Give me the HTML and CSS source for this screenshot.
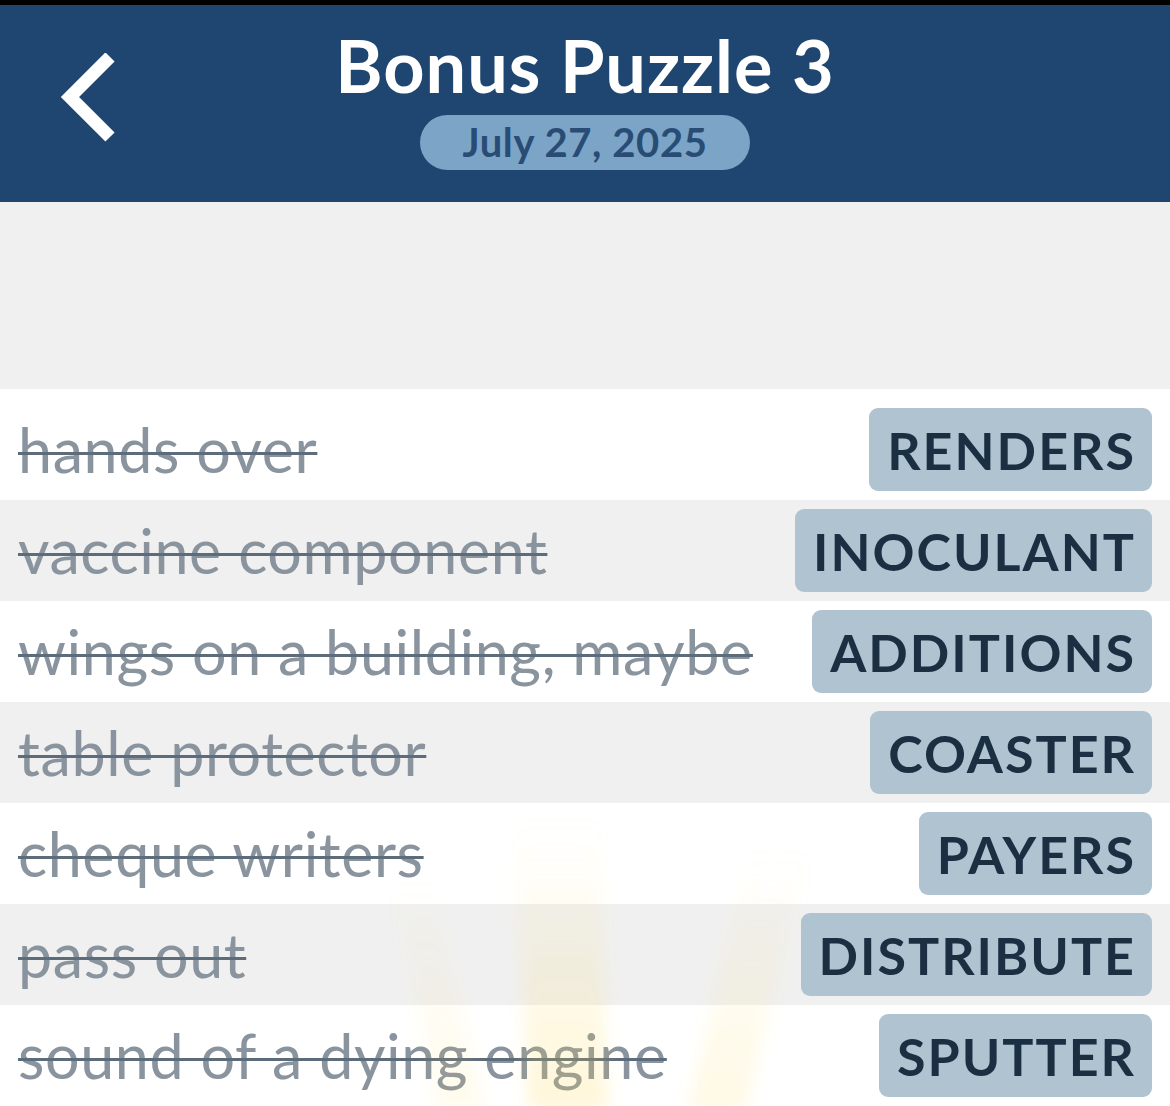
FILE: index.html
```html
<!DOCTYPE html>
<html>
  <head>
    <meta http-equiv="Content-Type" content="text/html;charset=utf-8" />
    <title>Bonus Puzzle 3</title>
    <link rel="stylesheet" href="styles.css">
  </head>
  <body>
    <div class="statusbar"></div>
    <header class="header">
      <a class="back" href="#">
        <svg width="64" height="96" viewBox="0 0 64 96">
          <polyline points="52,4 12,44 52,84" fill="none" stroke="#fff" stroke-width="13" />
        </svg>
      </a>
      <div class="titles">
        <h1 class="title">Bonus Puzzle 3</h1>
        <span class="date">July 27, 2025</span>
      </div>
      <div></div>
    </header>

    <div class="board"></div>

    <div class="list">
      <div class="row first">
        <span class="hint">hands over</span>
        <span class="answer">RENDERS</span>
      </div>
      <div class="row alt">
        <span class="hint">vaccine component</span>
        <span class="answer">INOCULANT</span>
      </div>
      <div class="row">
        <span class="hint">wings on a building, maybe</span>
        <span class="answer">ADDITIONS</span>
      </div>
      <div class="row alt">
        <span class="hint">table protector</span>
        <span class="answer">COASTER</span>
      </div>
      <div class="row">
        <span class="hint">cheque writers</span>
        <span class="answer">PAYERS</span>
      </div>
      <div class="row alt">
        <span class="hint">pass out</span>
        <span class="answer">DISTRIBUTE</span>
      </div>
      <div class="row">
        <span class="hint">sound of a dying engine</span>
        <span class="answer">SPUTTER</span>
      </div>

      <!-- light rays coming up from the bottom -->
      <svg class="rays" width="1170" height="326" viewBox="0 0 1170 326">
        <defs>
          <filter id="soft"><feGaussianBlur stdDeviation="8" /></filter>
          <linearGradient id="fade" x1="0" y1="0" x2="0" y2="1">
            <stop offset="0" stop-color="#ffd650" stop-opacity="0" />
            <stop offset="0.45" stop-color="#ffd650" stop-opacity="0.1" />
            <stop offset="1" stop-color="#ffd650" stop-opacity="0.22" />
          </linearGradient>
        </defs>
        <g filter="url(#soft)">
          <polygon points="515,40 600,40 608,330 528,330" fill="url(#fade)" />
          <polygon points="748,70 808,70 745,330 688,330" fill="url(#fade)" opacity="0.7" />
          <polygon points="392,100 432,100 485,330 438,330" fill="url(#fade)" opacity="0.5" />
        </g>
      </svg>
    </div>
  </body>
</html>
```

FILE: styles.css
```css
html,
body {
  margin: 0;
  padding: 0;
}

body {
  width: 1170px;
  height: 1106px;
  overflow: hidden;
  background-color: #fff;
  font-family: "Lato", "Open Sans", sans-serif;
}

.statusbar {
  height: 5px;
  background-color: #000;
}

.header {
  height: 197px;
  background-color: #1e4670;
  display: grid;
  grid-template-columns: 1fr auto 1fr;
  align-items: start;
}

.back {
  display: block;
  padding: 48px 0 0 58px;
}

.back svg {
  display: block;
}

.titles {
  display: flex;
  flex-direction: column;
  align-items: center;
  padding-top: 16px;
}

.title {
  margin: 0;
  color: #fff;
  font-size: 72px;
  font-weight: 700;
  letter-spacing: 1px;
  line-height: 88px;
}

.date {
  margin-top: 6px;
  width: 330px;
  height: 55px;
  border-radius: 28px;
  background-color: #7ba4c7;
  color: #294c75;
  font-size: 40px;
  font-weight: 700;
  letter-spacing: 0.6px;
  line-height: 55px;
  text-align: center;
}

.board {
  height: 187px;
  background-color: #f0f0f0;
}

.list {
  position: relative;
}

.row {
  height: 101px;
  display: flex;
  align-items: center;
  justify-content: space-between;
  padding: 0 18px;
  background-color: #fff;
}

.row.first {
  padding-top: 10px;
}

.row.alt {
  background-color: #f0f0f0;
}

.hint {
  color: #8a949e;
  font-size: 61px;
  letter-spacing: 0.6px;
  line-height: 1;
  text-decoration: line-through;
  text-decoration-color: #5d6c7b;
  text-decoration-thickness: 3px;
}

.answer {
  height: 83px;
  padding: 0 16px 0 18px;
  border-radius: 9px;
  background-color: #afc3d1;
  color: #1b2f43;
  font-size: 52px;
  font-weight: 700;
  line-height: 85px;
  letter-spacing: 2px;
}

.rays {
  position: absolute;
  left: 0;
  top: 391px;
  pointer-events: none;
}
```
